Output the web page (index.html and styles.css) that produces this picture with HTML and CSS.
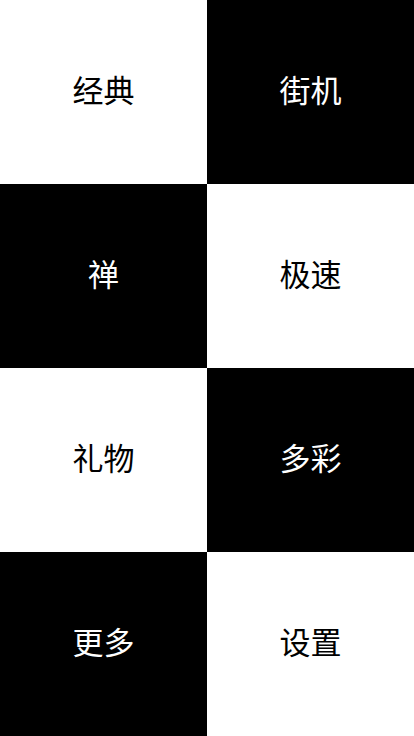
FILE: index.html
```html
<!DOCTYPE html>
<html lang="zh">
<head>
<meta charset="utf-8">
<link rel="stylesheet" href="styles.css">
</head>
<body>
<div class="grid">
  <div class="cell light">经典</div>
  <div class="cell dark">街机</div>
  <div class="cell dark">禅</div>
  <div class="cell light">极速</div>
  <div class="cell light">礼物</div>
  <div class="cell dark">多彩</div>
  <div class="cell dark">更多</div>
  <div class="cell light">设置</div>
</div>
</body>
</html>
```
FILE: styles.css
```css
html, body {
  margin: 0;
  padding: 0;
  width: 414px;
  height: 736px;
  overflow: hidden;
}
.grid {
  display: grid;
  grid-template-columns: 207px 207px;
  grid-template-rows: repeat(4, 184px);
  width: 414px;
  height: 736px;
}
.cell {
  display: flex;
  align-items: center;
  justify-content: center;
  padding-bottom: 7px;
  box-sizing: border-box;
  font-family: "Noto Sans CJK SC", "Noto Sans", sans-serif;
  font-size: 31px;
  line-height: 1;
}
.light {
  background: #fff;
  color: #000;
}
.dark {
  background: #000;
  color: #fff;
}
```
